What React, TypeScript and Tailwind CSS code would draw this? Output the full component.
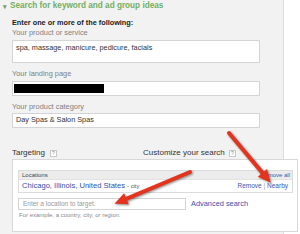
const Help = () => (
  <span className="inline-flex h-[7px] w-[7px] items-center justify-center border border-[#c8c8c8] bg-white text-[5px] leading-none text-[#888]">
    ?
  </span>
);

const Arrow = ({ x, y, len, angle }: { x: number; y: number; len: number; angle: number }) => (
  <g transform={`translate(${x} ${y}) rotate(${angle})`}>
    <line x1={0} y1={0} x2={len - 9} y2={0} stroke="#e5341d" strokeWidth={4} strokeLinecap="round" />
    <polygon points={`${len},0 ${len - 13},-6 ${len - 13},6`} fill="#e5341d" />
  </g>
);

export default function App() {
  return (
    <div className="relative h-[234px] w-[300px] overflow-hidden bg-white font-['Liberation_Sans',Arial,sans-serif]">
      <div className="h-[234px] w-[284px] border-r border-[#dcdcdc] bg-[#f2f2f2]">
        <div className="flex h-[13px] items-center gap-[3px] pl-[3px] text-[8.2px] font-bold leading-none text-[#72ae62]">
          <span className="text-[7px] text-[#7a9a70]">▾</span>
          <span>Search for keyword and ad group ideas</span>
        </div>
        <div className="pl-[12px]">
          <div className="mt-[5px] h-[10px] text-[7.3px] font-bold leading-[10px] text-[#222]">
            Enter one or more of the following:
          </div>
          <div className="h-[10px] text-[7.4px] leading-[10px] text-[#808080]">Your product or service</div>
          <div className="mt-[2px] h-[23px] w-[248px] border border-[#d4d4d4] bg-white pl-[3px] pt-[2px] text-[7.3px] leading-[10px] text-[#333]">
            spa, massage, manicure, pedicure, facials
          </div>
          <div className="mt-[6px] h-[10px] text-[7.4px] leading-[10px] text-[#808080]">Your landing page</div>
          <div className="mt-[2px] flex h-[15px] w-[248px] items-center border border-[#d4d4d4] bg-white pl-[1px]">
            <div className="h-[9px] w-[90px] bg-black" />
          </div>
          <div className="mt-[6px] h-[10px] text-[7.4px] leading-[10px] text-[#808080]">Your product category</div>
          <div className="mt-[1px] flex h-[15px] w-[248px] items-center border border-[#d4d4d4] bg-white pl-[3px] text-[7.3px] text-[#333]">
            Day Spas &amp; Salon Spas
          </div>
          <div className="mt-[20px] flex h-[10px] items-center text-[8px] leading-none text-[#333]">
            <div className="flex w-[131px] items-center gap-[5px]">
              <span>Targeting</span>
              <Help />
            </div>
            <div className="flex items-center gap-[4px]">
              <span>Customize your search</span>
              <Help />
            </div>
          </div>
          <div className="mt-[1px] h-[73px] w-[286px] border border-[#d8d8d8] bg-white pl-[5px] pt-[10px]">
            <div className="w-[275px] border border-[#dcdcdc]">
              <div className="flex h-[8px] items-center justify-between bg-[#ececec] pl-[3px] pr-[2px] text-[6px] leading-none text-[#444]">
                <span>Locations</span>
                <span className="text-[#3b57b0]">Remove all</span>
              </div>
              <div className="flex h-[13px] items-center justify-between border-t border-[#e2e2e2] pl-[3px] pr-[4px]">
                <span className="text-[7.6px] leading-none text-[#3450ac]">
                  Chicago, Illinois, United States <span className="text-[5.8px] text-[#555]">- city</span>
                </span>
                <span className="text-[6.5px] leading-none text-[#3b57b0]">
                  Remove <span className="text-[#999]">|</span> Nearby
                </span>
              </div>
            </div>
            <div className="mt-[5px] flex items-center gap-[5px]">
              <div className="flex h-[12px] w-[168px] items-center border border-[#d4d4d4] bg-white pl-[4px] text-[6.5px] text-[#999]">
                Enter a location to target.
              </div>
              <span className="text-[7.4px] leading-none text-[#3450ac]">Advanced search</span>
            </div>
            <div className="mt-[1px] pl-[1px] text-[6px] leading-[9px] text-[#888]">
              For example, a country, city, or region.
            </div>
          </div>
        </div>
      </div>
      <svg
        className="pointer-events-none absolute left-0 top-0 drop-shadow-[1px_1px_1px_rgba(0,0,0,0.45)]"
        width={300}
        height={234}
      >
        <Arrow x={229} y={133} len={65} angle={50} />
        <Arrow x={190} y={172} len={82} angle={157.2} />
      </svg>
    </div>
  );
}
